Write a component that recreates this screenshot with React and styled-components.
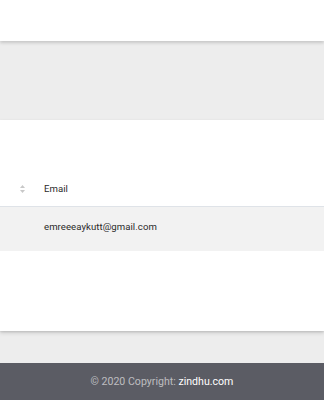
import React from "react";
import styled, { createGlobalStyle } from "styled-components";

const Global = createGlobalStyle`
  html, body {
    margin: 0;
    padding: 0;
    background: #ededed;
    font-family: Roboto, "Liberation Sans", sans-serif;
  }
`;

const Page = styled.div`
  display: flex;
  flex-direction: column;
  min-height: 400px;
`;

const Header = styled.header`
  height: 41px;
  background: #ffffff;
  box-shadow: 0 2px 3px rgba(0, 0, 0, 0.16);
  position: relative;
  z-index: 1;
`;

const Main = styled.main`
  flex: 1;
  padding: 79px 0 31px;
`;

const Card = styled.section`
  background: #ffffff;
  height: 211px;
  padding-top: 56px;
  box-sizing: border-box;
  box-shadow: 0 2px 4px rgba(0, 0, 0, 0.14), 0 1px 2px rgba(0, 0, 0, 0.1);
`;

const Table = styled.div`
  display: flex;
  flex-direction: column;
`;

const Row = styled.div`
  display: grid;
  grid-template-columns: 44px 1fr;
  align-items: center;
  box-sizing: border-box;
  height: ${(p) => (p.head ? "31px" : "44px")};
  padding-bottom: ${(p) => (p.head ? "5px" : "5px")};
  background: ${(p) => (p.striped ? "#f2f2f2" : "transparent")};
  border-bottom: ${(p) => (p.head ? "1px solid #dfe3e8" : "none")};
  font-size: 9.6px;
  color: #2b2b2b;
`;

const SortCell = styled.div`
  display: flex;
  justify-content: center;
`;

const Cell = styled.div`
  letter-spacing: 0.05px;
`;

const Footer = styled.footer`
  height: 37px;
  background: #5b5c64;
  display: flex;
  align-items: center;
  justify-content: center;
  font-size: 10.6px;
  color: rgba(255, 255, 255, 0.6);
`;

const Link = styled.a`
  color: #ffffff;
  text-decoration: none;
`;

const SortIcon = () => (
  <svg width="5" height="8" viewBox="0 0 5 8">
    <path d="M2.5 0 L5 3 H0 Z" fill="#c8c8c8" />
    <path d="M2.5 8 L5 5 H0 Z" fill="#c8c8c8" />
  </svg>
);

export default function App() {
  return (
    <Page>
      <Global />
      <Header />
      <Main>
        <Card>
          <Table>
            <Row head>
              <SortCell>
                <SortIcon />
              </SortCell>
              <Cell>Email</Cell>
            </Row>
            <Row striped>
              <span />
              <Cell>emreeeaykutt@gmail.com</Cell>
            </Row>
          </Table>
        </Card>
      </Main>
      <Footer>
        © 2020 Copyright:&nbsp;<Link href="#">zindhu.com</Link>
      </Footer>
    </Page>
  );
}
